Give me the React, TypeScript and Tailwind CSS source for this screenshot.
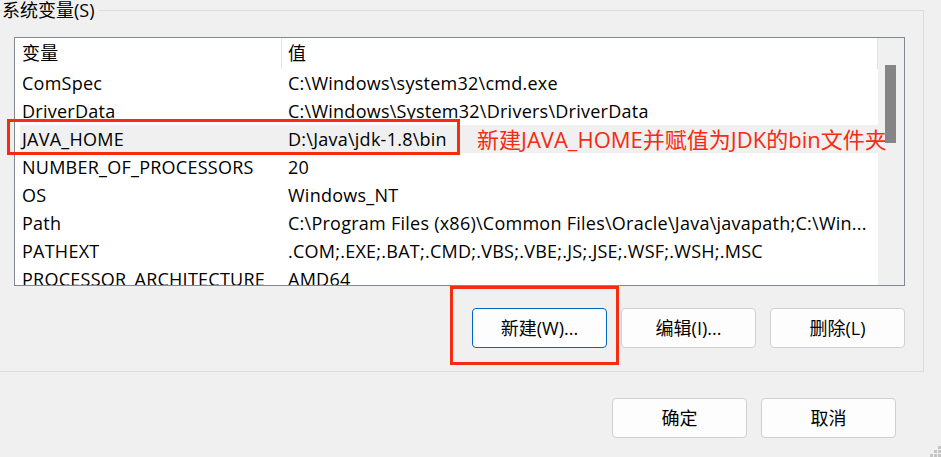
import React from "react";

const rows: [string, string][] = [
  ["ComSpec", "C:\\Windows\\system32\\cmd.exe"],
  ["DriverData", "C:\\Windows\\System32\\Drivers\\DriverData"],
  ["JAVA_HOME", "D:\\Java\\jdk-1.8\\bin"],
  ["NUMBER_OF_PROCESSORS", "20"],
  ["OS", "Windows_NT"],
  ["Path", "C:\\Program Files (x86)\\Common Files\\Oracle\\Java\\javapath;C:\\Win..."],
  ["PATHEXT", ".COM;.EXE;.BAT;.CMD;.VBS;.VBE;.JS;.JSE;.WSF;.WSH;.MSC"],
  ["PROCESSOR_ARCHITECTURE", "AMD64"],
];

function WinButton({ label, focused }: { label: string; focused?: boolean }) {
  return (
    <button
      className={`w-[135px] h-[40px] rounded-[4px] bg-[#fdfdfd] border text-[18px] text-black ${
        focused ? "border-[#0067c0]" : "border-[#d0d0d0]"
      }`}
    >
      {label}
    </button>
  );
}

export default function App() {
  return (
    <div
      className="relative w-[941px] h-[457px] overflow-hidden bg-[#f0f0f0] text-black text-[18px]"
      style={{ fontFamily: '"Open Sans", "Noto Sans CJK SC", sans-serif' }}
    >
      {/* Group box */}
      <div className="relative ml-[-10px] mt-[10px] w-[934px] h-[362px] border border-[#dcdcdc] pt-[26px] pl-[23px]">
        <span className="absolute left-[11px] top-[-12px] pr-[4px] leading-[22px] bg-[#f0f0f0]">
          系统变量(S)
        </span>

        {/* List view */}
        <div className="flex w-[891px] h-[249px] border border-[#828790] bg-white overflow-hidden tracking-[0.25px]">
          <div className="flex-1 flex flex-col">
            <div className="flex h-[31px] shrink-0 items-center">
              <div className="w-[266px] pl-[7px]">变量</div>
              <div className="w-px h-full bg-[#e5e5e5]" />
              <div className="flex-1 pl-[6px]">值</div>
              <div className="w-px h-full bg-[#e5e5e5]" />
            </div>
            {rows.map(([name, value]) => (
              <div
                key={name}
                className={`flex h-[28px] shrink-0 items-center ml-[5px] whitespace-nowrap ${
                  name === "JAVA_HOME" ? "bg-[#f0f0f0]" : ""
                }`}
              >
                <div className="w-[262px] pl-[2px] overflow-hidden">{name}</div>
                <div className="flex-1 pl-[6px] overflow-hidden">{value}</div>
              </div>
            ))}
          </div>
          {/* Scrollbar */}
          <div className="w-[26px] shrink-0 bg-[#f0f0f0] pt-[27px] pl-[7px]">
            <div className="w-[11px] h-[78px] bg-[#858585]" />
          </div>
        </div>

        {/* List buttons */}
        <div className="flex justify-end gap-[14px] w-[891px] mt-[22px]">
          <WinButton label="新建(W)..." focused />
          <WinButton label="编辑(I)..." />
          <WinButton label="删除(L)" />
        </div>
      </div>

      {/* Dialog buttons */}
      <div className="flex justify-end gap-[14px] mt-[26px] pr-[45px]">
        <WinButton label="确定" />
        <WinButton label="取消" />
      </div>

      {/* Annotations */}
      <div className="absolute left-[7px] top-[119px] w-[453px] h-[36px] border-[3px] border-[#f72a12]" />
      <div className="absolute left-[450px] top-[286px] w-[169px] h-[79px] border-[3px] border-[#f72a12]" />
      <span className="absolute left-[477px] top-[123px] leading-[32px] text-[22px] text-[#f72a12] whitespace-nowrap">
        新建JAVA_HOME并赋值为JDK的bin文件夹
      </span>

      {/* Resize grip */}
      <svg className="absolute right-0 bottom-0" width="11" height="11" viewBox="0 0 11 11">
        <rect x="8" y="0" width="3" height="3" fill="#c4c4c4" />
        <rect x="4" y="4" width="3" height="3" fill="#c4c4c4" />
        <rect x="8" y="4" width="3" height="3" fill="#c4c4c4" />
        <rect x="0" y="8" width="3" height="3" fill="#c4c4c4" />
        <rect x="4" y="8" width="3" height="3" fill="#c4c4c4" />
        <rect x="8" y="8" width="3" height="3" fill="#c4c4c4" />
      </svg>
    </div>
  );
}
